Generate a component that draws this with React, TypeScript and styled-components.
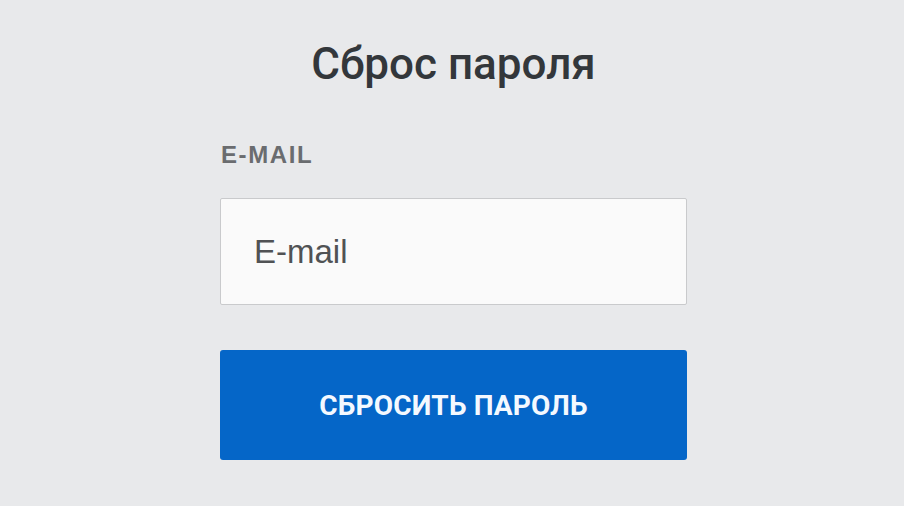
import * as React from 'react';
import styled, { createGlobalStyle } from 'styled-components';

const Global = createGlobalStyle`
  html, body {
    margin: 0;
    padding: 0;
    background: #e8e9eb;
  }
`;

const Page = styled.div`
  width: 904px;
  height: 506px;
  display: flex;
  flex-direction: column;
  align-items: center;
  box-sizing: border-box;
  padding-top: 36px;
  padding-left: 3px;
`;

const Title = styled.h1`
  margin: 0;
  font-family: Roboto, "Noto Sans", sans-serif;
  font-weight: 500;
  font-size: 44px;
  line-height: 56px;
  color: #33373b;
`;

const Form = styled.form`
  width: 467px;
  margin-top: 49px;
  display: flex;
  flex-direction: column;
`;

const Label = styled.label`
  font-family: "Liberation Sans", Arial, sans-serif;
  font-weight: 700;
  font-size: 24px;
  line-height: 28px;
  letter-spacing: 1.6px;
  color: #6a6c6f;
  padding-left: 1px;
`;

const Input = styled.input`
  margin-top: 29px;
  height: 107px;
  box-sizing: border-box;
  border: 1px solid #c9cacc;
  border-radius: 2px;
  background: #fafafa;
  padding: 0 33px;
  font-family: "Liberation Sans", Arial, sans-serif;
  font-size: 33px;
  color: #333;
  outline: none;
  &::placeholder {
    color: #505254;
  }
`;

const Submit = styled.button`
  margin-top: 45px;
  height: 110px;
  border: none;
  border-radius: 3px;
  background: #0566c8;
  color: #f4f9ff;
  font-family: Roboto, "Noto Sans", sans-serif;
  font-weight: 700;
  font-size: 28px;
  letter-spacing: 0.2px;
  cursor: pointer;
`;

function App() {
  return (
    <>
      <Global />
      <Page>
        <Title>Сброс пароля</Title>
        <Form onSubmit={(e) => e.preventDefault()}>
          <Label htmlFor="email">E-MAIL</Label>
          <Input id="email" type="email" placeholder="E-mail" />
          <Submit type="submit">СБРОСИТЬ ПАРОЛЬ</Submit>
        </Form>
      </Page>
    </>
  );
}

export default App;
